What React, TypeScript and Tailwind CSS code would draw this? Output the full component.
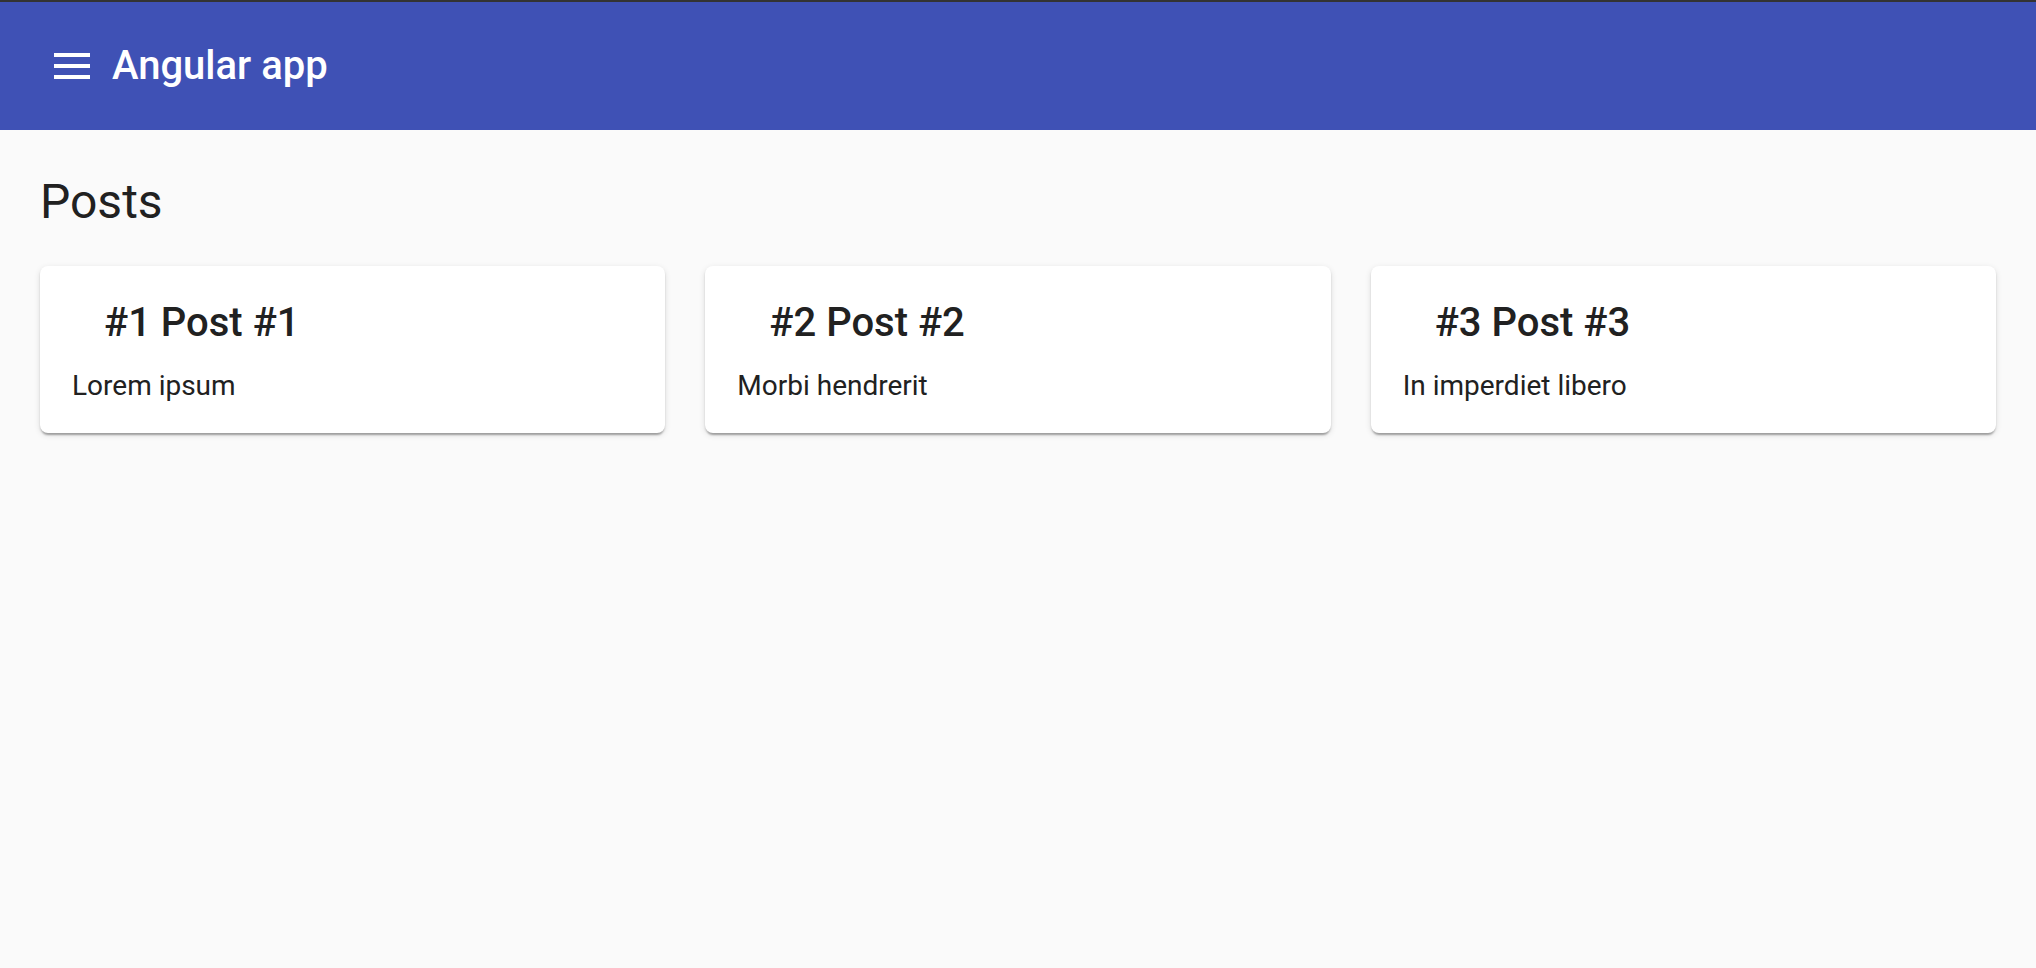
const posts = [
  { id: 1, title: "Post #1", body: "Lorem ipsum" },
  { id: 2, title: "Post #2", body: "Morbi hendrerit" },
  { id: 3, title: "Post #3", body: "In imperdiet libero" },
];

const MenuIcon = () => (
  <svg width="36" height="26" viewBox="0 0 36 26" fill="#ffffff">
    <rect x="0" y="0" width="36" height="4" />
    <rect x="0" y="11" width="36" height="4" />
    <rect x="0" y="22" width="36" height="4" />
  </svg>
);

const App = () => {
  return (
    <div className="min-h-[968px] bg-[#fafafa] font-['Roboto',_'Liberation_Sans',_sans-serif] text-[#212121]">
      {/* Toolbar */}
      <header className="h-[130px] border-t-2 border-[#333333] bg-[#3f51b5] flex items-center pl-[54px] text-white">
        <MenuIcon />
        <span className="ml-[22px] text-[40px] leading-[48px] font-medium">Angular app</span>
      </header>

      <main className="px-[40px]">
        <h1 className="pt-[44px] text-[48px] leading-[56px] font-normal">Posts</h1>

        {/* Cards */}
        <div className="mt-[36px] grid grid-cols-3 gap-[40px]">
          {posts.map((post) => (
            <div
              key={post.id}
              className="bg-white rounded-[8px] pt-[32px] pb-[29px] px-[32px] shadow-[0_4px_2px_-2px_rgba(0,0,0,0.2),0_2px_2px_0_rgba(0,0,0,0.14),0_2px_6px_0_rgba(0,0,0,0.12)]"
            >
              <div className="ml-[32px] text-[40px] leading-[50px] font-medium">
                #{post.id} {post.title}
              </div>
              <p className="mt-[20px] text-[28px] leading-[36px]">{post.body}</p>
            </div>
          ))}
        </div>
      </main>
    </div>
  );
};

export default App;
